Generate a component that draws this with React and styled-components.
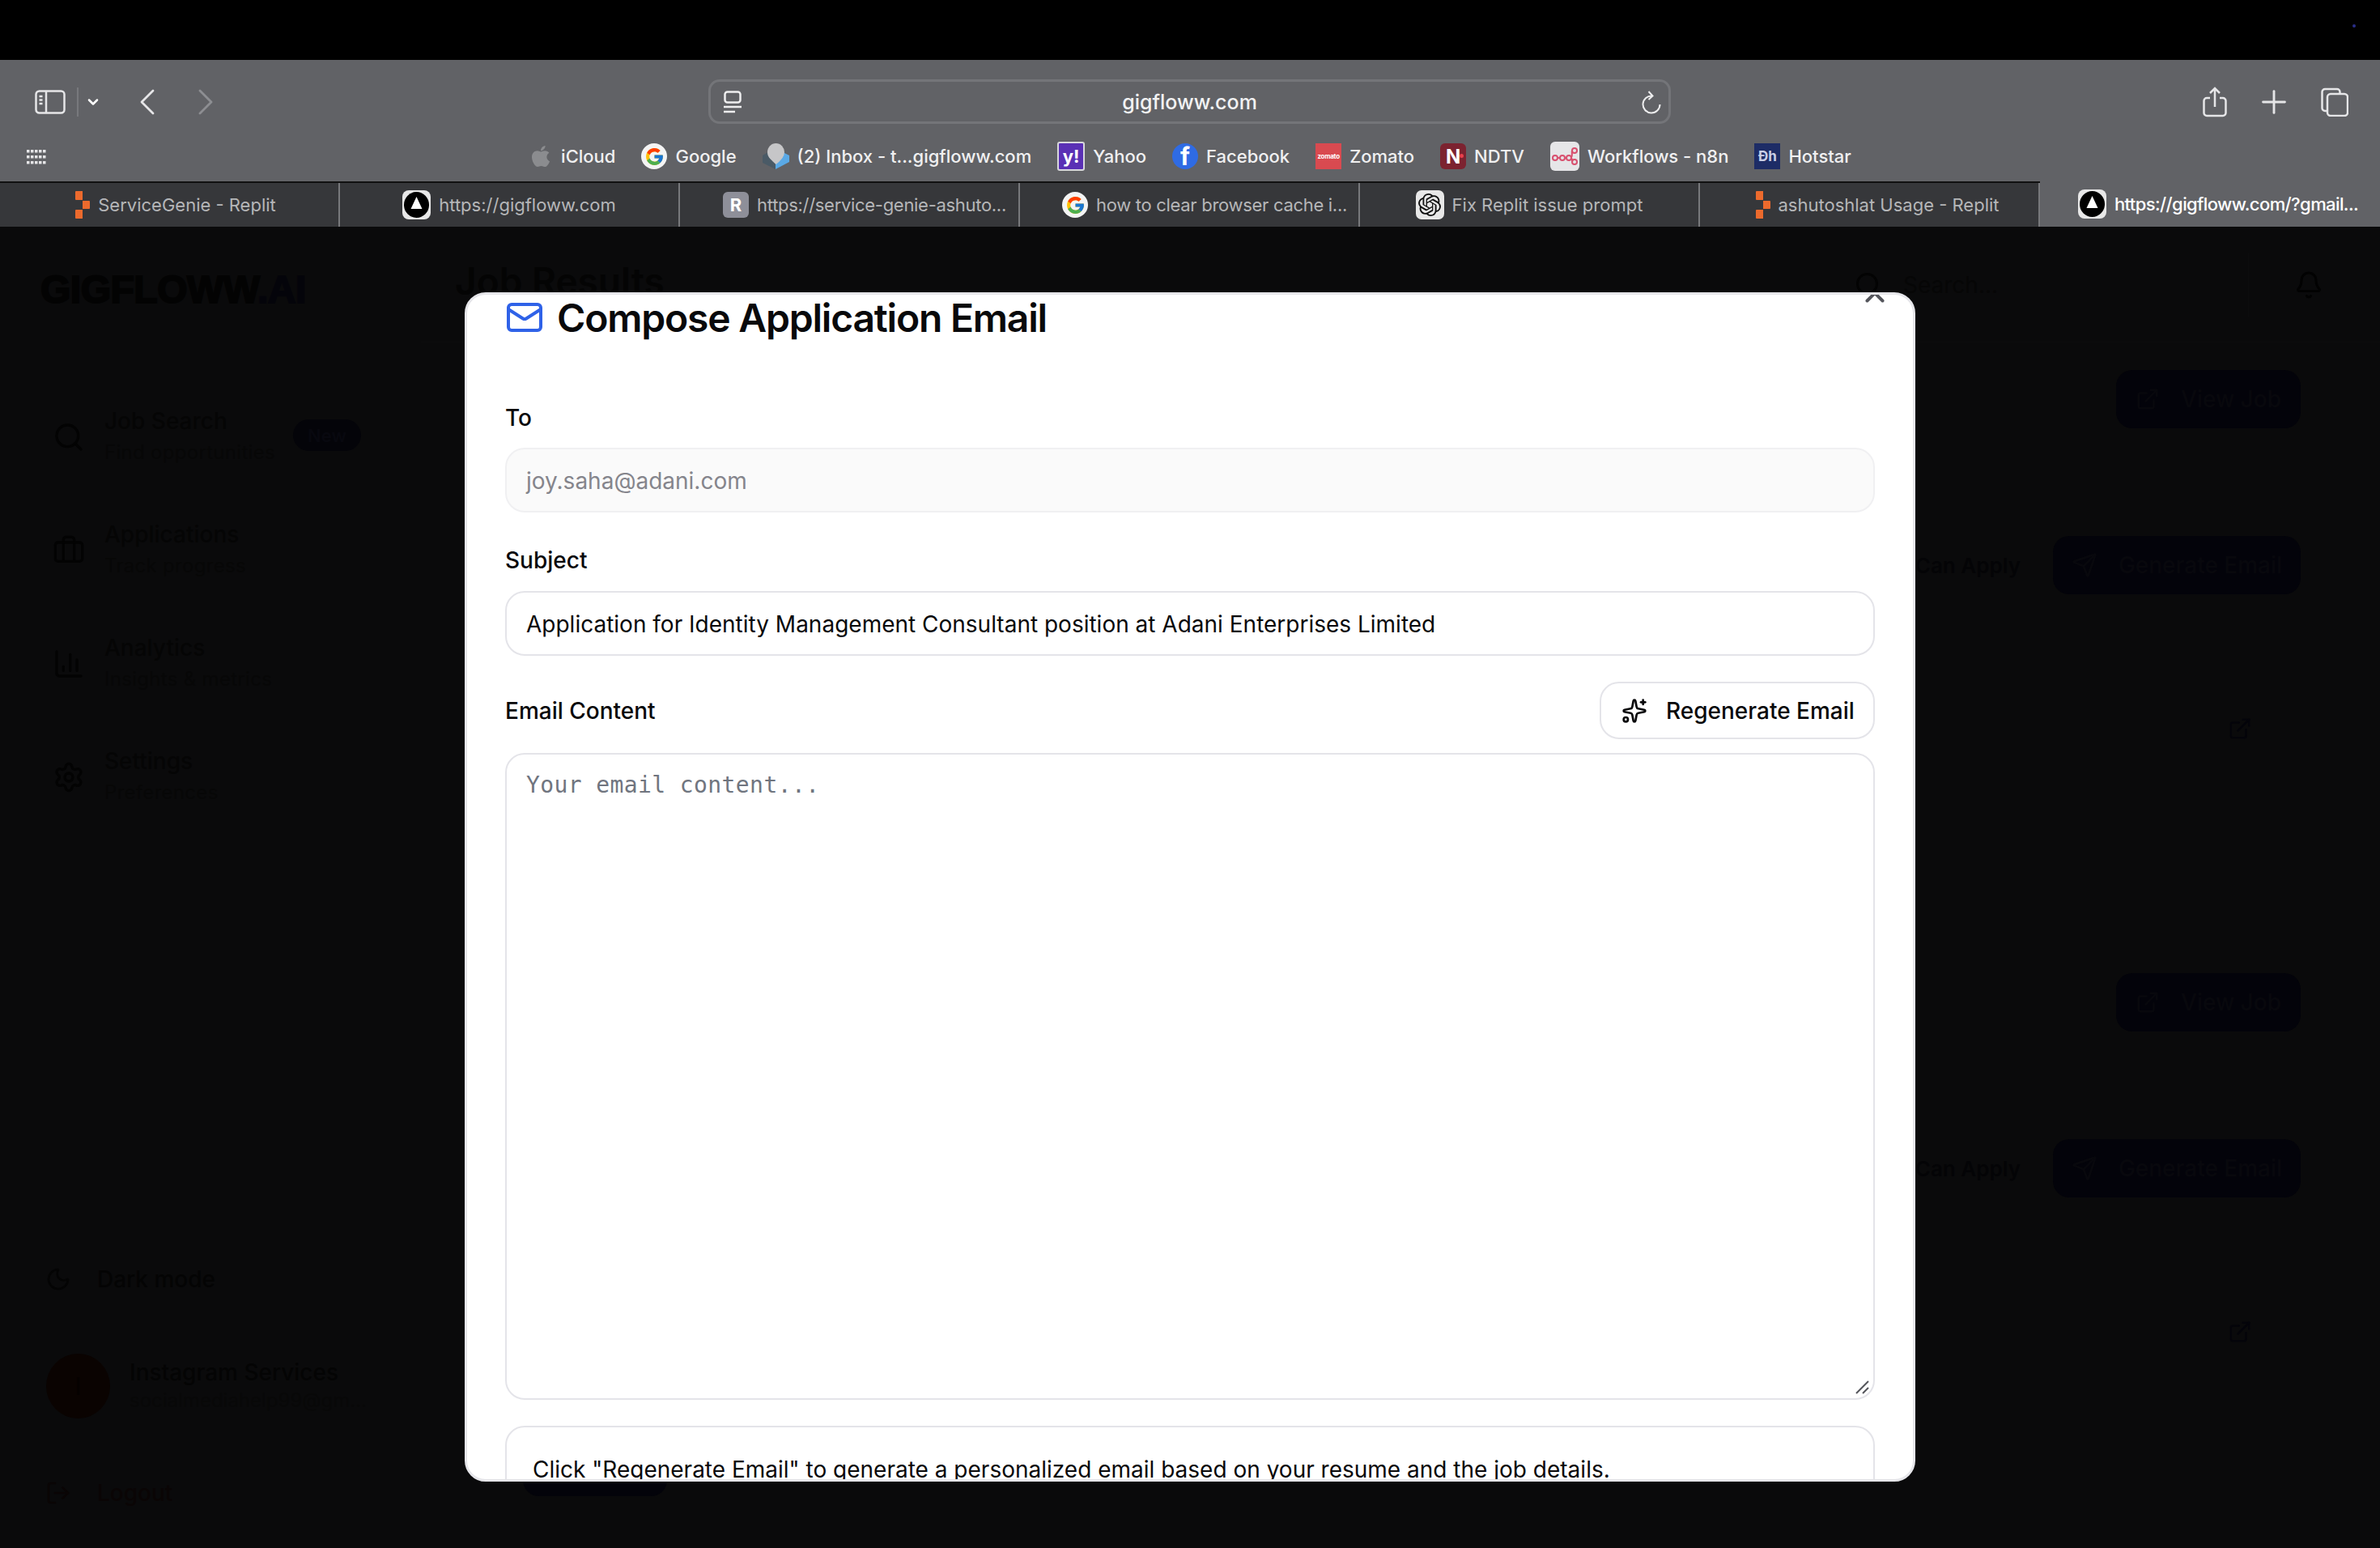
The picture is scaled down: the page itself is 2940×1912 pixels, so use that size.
import React from 'react'
import styled, { createGlobalStyle } from 'styled-components'
import { FcGoogle } from 'react-icons/fc'
import { FaApple } from 'react-icons/fa'
import { SiOpenai } from 'react-icons/si'
import {
  Search, Briefcase, ChartColumn, Settings, Moon, LogOut, Bell, ExternalLink, Send,
  Mail, Sparkles, X, ChevronDown, ChevronLeft, ChevronRight, Plus,
} from 'lucide-react'

const GlobalStyle = createGlobalStyle`
  html, body { margin: 0; padding: 0; background: #0a0a0b; }
  body { font-family: Inter, "Liberation Sans", sans-serif; overflow: hidden; }
  * { box-sizing: border-box; }
`

const Page = styled.div`
  position: relative;
  width: 2940px;
  height: 1912px;
  display: flex;
  flex-direction: column;
  overflow: hidden;
  background: #0a0a0b;
`

const MenuBar = styled.div`
  height: 74px;
  flex: none;
  background: #000;
  position: relative;
`

const MenuDot = styled.span`
  position: absolute;
  left: 2906px;
  top: 30px;
  width: 4px;
  height: 4px;
  border-radius: 50%;
  background: #2a2f8a;
`

const Toolbar = styled.div`
  height: 94px;
  flex: none;
  background: #616266;
  display: flex;
  align-items: center;
  padding: 9px 39px 0 43px;
  color: #e6e6e8;
`

const ToolLeft = styled.div`
  width: 832px;
  display: flex;
  align-items: center;
`

const Divider = styled.span`
  width: 2px;
  height: 36px;
  margin: 0 8px 0 14px;
  background: #77787c;
`

const NavChevron = styled.span`
  display: flex;
  margin-left: ${p => p.$gap}px;
  color: ${p => (p.$dim ? '#8d8e92' : '#e6e6e8')};
`

const UrlBar = styled.div`
  width: 1189px;
  height: 55px;
  border: 3px solid #747579;
  border-radius: 14px;
  display: flex;
  align-items: center;
  justify-content: space-between;
  padding: 0 9px 0 16px;
  position: relative;
`

const UrlText = styled.span`
  position: absolute;
  left: 0;
  right: 0;
  text-align: center;
  font-size: 25px;
  font-weight: 500;
  color: #f2f2f3;
`

const ToolRight = styled.div`
  margin-left: auto;
  display: flex;
  align-items: center;
  gap: 35px;
`

const BookmarkBar = styled.div`
  height: 56px;
  flex: none;
  background: #616266;
  position: relative;
  display: flex;
  align-items: center;
  justify-content: center;
  gap: 32px;
  padding-bottom: 6px;
`

const GridWrap = styled.span`
  position: absolute;
  left: 33px;
  top: 17px;
  display: flex;
`

const Bookmark = styled.span`
  display: flex;
  align-items: center;
  gap: 10px;
  font-size: 22px;
  font-weight: 500;
  color: #f0f0f1;
  white-space: nowrap;
`

const TabStrip = styled.div`
  height: 56px;
  flex: none;
  display: grid;
  grid-template-columns: repeat(7, 420px);
  border-top: 2px solid #111;
  background: #36373a;
`

const Tab = styled.div`
  display: flex;
  align-items: center;
  justify-content: center;
  gap: 10px;
  padding-left: ${p => p.$shift || 0}px;
  font-size: 22px;
  font-weight: ${p => (p.$active ? 500 : 400)};
  letter-spacing: ${p => p.$track || 0}px;
  white-space: nowrap;
  color: ${p => (p.$active ? '#fff' : '#b5b6b8')};
  background: ${p => (p.$active ? '#616266' : 'transparent')};
  margin-top: ${p => (p.$active ? '-2px' : '0')};
  border-right: ${p => (p.$active ? 'none' : '2px solid #77787b')};
`

const Tile = styled.span`
  position: relative;
  width: ${p => p.$w || 32}px;
  height: ${p => p.$h || 32}px;
  flex: none;
  border-radius: ${p => p.$r ?? 6}px;
  background: ${p => p.$bg};
  color: ${p => p.$fg || '#fff'};
  border: ${p => (p.$ring ? `2px solid ${p.$ring}` : 'none')};
  font-size: ${p => p.$size || 20}px;
  font-weight: 700;
  display: flex;
  align-items: center;
  justify-content: center;
  overflow: hidden;
  letter-spacing: ${p => p.$track || 0}px;
`

const NdtvDot = styled.span`
  position: absolute;
  right: 3px;
  top: 13px;
  width: 5px;
  height: 5px;
  border-radius: 50%;
  background: #e8404a;
`

/* dimmed app behind the modal */
const AppBody = styled.div`
  flex: 1;
  display: flex;
  min-height: 0;
`

const Sidebar = styled.aside`
  width: 520px;
  flex: none;
  display: flex;
  flex-direction: column;
  padding: 56px 0 0 50px;
  color: #050505;
`

const Logo = styled.div`
  font-family: "Liberation Sans", Arial, sans-serif;
  font-size: 48px;
  font-weight: 700;
  line-height: 44px;
  -webkit-text-stroke: 2px #030303;
  color: #030303;
  letter-spacing: -0.5px;
  span { color: #04040a; -webkit-text-stroke-color: #04040a; }
`

const NavList = styled.nav`
  margin-top: 119px;
  display: flex;
  flex-direction: column;
  gap: 59px;
`

const NavItem = styled.div`
  height: 81px;
  display: flex;
  align-items: center;
  padding-left: 15px;
  gap: 24px;
  position: relative;
`

const NavLabel = styled.div`
  font-size: 28px;
  font-weight: 500;
  line-height: 38px;
  color: #050505;
`

const NavSub = styled.div`
  font-size: 24px;
  line-height: 40px;
  color: #070707;
  letter-spacing: 0.3px;
`

const NewBadge = styled.span`
  position: absolute;
  left: 312px;
  top: 19px;
  width: 84px;
  height: 39px;
  border-radius: 20px;
  background: #040409;
  color: #08080f;
  font-size: 22px;
  font-weight: 600;
  display: flex;
  align-items: center;
  justify-content: center;
`

const SideFoot = styled.div`
  margin-top: auto;
  padding-bottom: 46px;
  display: flex;
  flex-direction: column;
`

const FootRow = styled.div`
  display: flex;
  align-items: center;
  gap: 32px;
  padding-left: 6px;
  font-size: 28px;
  font-weight: 500;
  height: 44px;
  color: ${p => p.$color || '#040404'};
`

const UserRow = styled.div`
  display: flex;
  align-items: center;
  gap: 24px;
  padding-left: 7px;
  margin: 70px 0 70px;
`

const Avatar = styled.div`
  width: 79px;
  height: 80px;
  border-radius: 50%;
  background: #0a0301;
  color: #050100;
  font-size: 30px;
  display: flex;
  align-items: center;
  justify-content: center;
`

const UserName = styled.div`
  font-size: 28px;
  font-weight: 500;
  line-height: 36px;
  color: #040404;
`

const UserMail = styled.div`
  font-size: 24px;
  line-height: 34px;
  color: #080808;
`

const Main = styled.main`
  flex: 1;
  display: flex;
  flex-direction: column;
  min-width: 0;
`

const MainHeader = styled.header`
  height: 143px;
  flex: none;
  padding: 33px 70px 0 42px;
  display: flex;
  align-items: flex-start;
  justify-content: space-between;
  border-bottom: 1px solid #0c0c0d;
`

const PageTitle = styled.h1`
  margin: 0;
  font-size: 46px;
  font-weight: 600;
  line-height: 68px;
  color: #040404;
`

const HeaderTools = styled.div`
  display: flex;
  align-items: center;
  gap: 56px;
`

const SearchBox = styled.div`
  width: 494px;
  height: 78px;
  display: flex;
  align-items: center;
  gap: 25px;
  padding-left: 6px;
  font-size: 28px;
  color: #060606;
  border-right: 1px solid #0d0d0e;
`

const JobCard = styled.section`
  height: 745px;
  flex: none;
  padding: 34px 98px 0 0;
  display: flex;
  flex-direction: column;
  align-items: flex-end;
`

const DarkButton = styled.div`
  height: 72px;
  width: ${p => p.$w}px;
  flex: none;
  border-radius: 20px;
  background: #03030a;
  color: #08080d;
  display: flex;
  align-items: center;
  justify-content: center;
  gap: 26px;
  font-size: 28px;
  font-weight: 500;
`

const ApplyRow = styled.div`
  margin-top: 133px;
  flex: none;
  display: flex;
  align-items: center;
  gap: 40px;
`

const ApplyNote = styled.span`
  font-size: 26px;
  font-weight: 600;
  color: #040406;
`

const CardLink = styled.span`
  display: flex;
  flex: none;
  margin: 151px 60px 0 0;
  color: #04040a;
`

const LowerAction = styled.div`
  align-self: flex-start;
  flex: none;
  width: 178px;
  height: 72px;
  margin: 116px 0 0 126px;
  border-radius: 20px;
  background: #03030a;
`

/* modal */
const Modal = styled.div`
  position: absolute;
  left: 574px;
  top: 361px;
  width: 1792px;
  height: 1469px;
  background: #fff;
  border: 3px solid #e6e6ea;
  border-radius: 26px;
  overflow: hidden;
  padding: 0 47px;
  color: #09090b;
`

const CloseMark = styled.span`
  position: absolute;
  right: 28px;
  top: -21px;
  display: flex;
  color: #55565c;
`

const ModalTitle = styled.h2`
  margin: 0;
  height: 56px;
  display: flex;
  align-items: center;
  gap: 16px;
  font-size: 48px;
  font-weight: 600;
  letter-spacing: -1.2px;
  color: #09090b;
`

const Field = styled.div`
  display: flex;
  flex-direction: column;
  margin-top: ${p => p.$top}px;
`

const FieldLabel = styled.label`
  font-size: 28px;
  font-weight: 500;
  line-height: 40px;
`

const TextBox = styled.div`
  height: 80px;
  margin-top: ${p => p.$top}px;
  border: 2px solid ${p => (p.$muted ? '#f0f0f2' : '#e4e4e9')};
  border-radius: 24px;
  background: ${p => (p.$muted ? '#fafafa' : '#fff')};
  color: ${p => (p.$muted ? '#85858c' : '#09090b')};
  font-size: 28px;
  line-height: 78px;
  padding: 0 24px;
  white-space: nowrap;
`

const ContentHead = styled.div`
  display: flex;
  align-items: center;
  justify-content: space-between;
  margin-top: 32px;
`

const RegenButton = styled.button`
  width: 340px;
  height: 71px;
  border: 2px solid #e4e4e9;
  border-radius: 24px;
  background: #fff;
  color: #09090b;
  font: 500 28px Inter, sans-serif;
  display: flex;
  align-items: center;
  gap: 23px;
  padding: 0 0 0 25px;
`

const ContentArea = styled.div`
  position: relative;
  margin-top: 17px;
  height: 799px;
  border: 2px solid #e4e4e9;
  border-radius: 24px;
  padding: 18px 24px;
  font-family: "DejaVu Sans Mono", monospace;
  font-size: 28px;
  letter-spacing: 0.4px;
  line-height: 40px;
  color: #70757f;
`

const Grip = styled.span`
  position: absolute;
  right: 4px;
  bottom: 4px;
  display: flex;
`

const HintBox = styled.div`
  margin-top: 32px;
  height: 120px;
  border: 2px solid #e4e4e9;
  border-radius: 24px;
  padding: 32px 32px 0;
  font-size: 28px;
  line-height: 40px;
  white-space: nowrap;
`

const ReplitMark = () => (
  <svg width="18" height="34" viewBox="0 0 18 34">
    <path d="M0 1a1 1 0 0 1 1-1h8v11H1a1 1 0 0 1-1-1zM9 12h8a1 1 0 0 1 1 1v8a1 1 0 0 1-1 1H9zM0 24a1 1 0 0 1 1-1h8v11H1a1 1 0 0 1-1-1z" fill="#ec6a2d" />
  </svg>
)

const GigMark = () => (
  <Tile $w={35} $h={36} $r={8} $bg="#e8e8e8">
    <svg width="35" height="36" viewBox="0 0 35 36">
      <ellipse cx="17.5" cy="18" rx="15.5" ry="16" fill="#000" />
      <path d="M17.5 8l7 15H10.5z" fill="#fff" />
    </svg>
  </Tile>
)

const GoogleMark = () => (
  <Tile $r={16} $bg="#f4f4f4"><FcGoogle size={25} /></Tile>
)

const InboxMark = () => (
  <svg width="33" height="32" viewBox="0 0 33 32">
    <path d="M0 15l10-6 6 10v13L0 24z" fill="#4a5a66" />
    <path d="M33 15l-10-5-7 10v12l17-9z" fill="#5aa9e6" />
    <ellipse cx="16.5" cy="11" rx="10.5" ry="11" fill="#c6c6c8" />
    <path d="M8 17c3 4 6 7 8.500 9 3-2 6-5 8.500-9z" fill="#c6c6c8" />
  </svg>
)

const N8nMark = () => (
  <Tile $w={36} $h={36} $r={6} $bg="#e6e6e8">
    <svg width="32" height="22" viewBox="0 0 32 22" fill="none" stroke="#d8506f" strokeWidth="2">
      <circle cx="4" cy="13" r="3" />
      <circle cx="13" cy="13" r="3" />
      <circle cx="21" cy="13" r="3" />
      <circle cx="28" cy="4" r="3" />
      <circle cx="28" cy="18" r="3" />
      <path d="M7 13h3M16 13h2M24 12c2-1 0-7 1-8M24 14c2 1 1 4 1 4" />
    </svg>
  </Tile>
)

const SidebarIcon = () => (
  <svg width="38" height="30" viewBox="0 0 38 30" fill="none" stroke="#e6e6e8" strokeWidth="2.500">
    <rect x="1.500" y="1.500" width="35" height="27" rx="4" />
    <path d="M14 2v26" />
    <path d="M5.500 8h4M5.500 12.500h4M5.500 17h4" />
  </svg>
)

const PageIcon = () => (
  <svg width="22" height="28" viewBox="0 0 22 28" fill="none" stroke="#eeeeef" strokeWidth="2.500">
    <rect x="1.500" y="1.500" width="19" height="13" rx="3" />
    <path d="M0 20h22M0 26h14" />
  </svg>
)

const ReloadIcon = () => (
  <svg width="24" height="30" viewBox="0 0 24 30" fill="none" stroke="#eeeeef" strokeWidth="2">
    <path d="M13 7.500A10.500 10.500 0 1 0 22.500 18" />
    <path d="M8.500 2l5 5.500-5 4.500" />
  </svg>
)

const ShareIcon = () => (
  <svg width="30" height="38" viewBox="0 0 30 38" fill="none" stroke="#e6e6e8" strokeWidth="2.500">
    <path d="M9 14H5a3.500 3.500 0 0 0-3.500 3.500v15A3.500 3.500 0 0 0 5 36h20a3.500 3.500 0 0 0 3.500-3.500v-15A3.500 3.500 0 0 0 25 14h-4" />
    <path d="M15 25V2M9 8l6-6 6 6" />
  </svg>
)

const TabsIcon = () => (
  <svg width="34" height="36" viewBox="0 0 34 36" fill="none" stroke="#e6e6e8" strokeWidth="2.500">
    <path d="M7 29H5a3.500 3.500 0 0 1-3.500-3.500v-20A3.500 3.500 0 0 1 5 2h15a3.500 3.500 0 0 1 3.500 3.500V7" />
    <rect x="8" y="8" width="25" height="27" rx="4" />
  </svg>
)

const AppsIcon = () => (
  <svg width="24" height="18" viewBox="0 0 24 18" fill="#e6e6e8">
    {[0, 7, 14].map(y => [0, 5, 10, 15, 20].map(x => (
      <rect key={`${x}-${y}`} x={x} y={y} width="3.500" height="3.500" />
    )))}
  </svg>
)

const bookmarks = [
  { label: 'iCloud', icon: <FaApple size={30} color="#8b8c8f" /> },
  { label: 'Google', icon: <GoogleMark /> },
  { label: '(2) Inbox - t...gigfloww.com', icon: <InboxMark /> },
  { label: 'Yahoo', icon: <Tile $w={34} $h={36} $r={3} $bg="#5a30b5" $ring="#d8d8dc" $size={22}>y!</Tile> },
  { label: 'Facebook', icon: <Tile $r={16} $bg="#2f6be4" $size={30}>f</Tile> },
  { label: 'Zomato', icon: <Tile $r={0} $bg="#d94a50" $size={8} $track={-0.3}>zomato</Tile> },
  { label: 'NDTV', icon: <Tile $bg="#7c2330" $size={24}>N<NdtvDot /></Tile> },
  { label: 'Workflows - n8n', icon: <N8nMark /> },
  { label: 'Hotstar', icon: <Tile $r={0} $bg="#1d2c66" $fg="#c9cfe6" $size={17}>Đh</Tile> },
]

const tabs = [
  { label: 'ServiceGenie - Replit', icon: <ReplitMark />, shift: 16 },
  { label: 'https://gigfloww.com', icon: <GigMark /> },
  { label: 'https://service-genie-ashuto...', icon: <Tile $bg="#8e8f99" $size={22}>R</Tile>, shift: 38, track: -0.3 },
  { label: 'how to clear browser cache i...', icon: <GoogleMark />, shift: 38, track: -0.3 },
  { label: 'Fix Replit issue prompt', icon: <Tile $w={35} $h={36} $r={7} $bg="#e8e8e8" $fg="#111"><SiOpenai size={28} /></Tile> },
  { label: 'ashutoshlat Usage - Replit', icon: <ReplitMark />, shift: 20 },
  { label: 'https://gigfloww.com/?gmail...', icon: <GigMark />, active: true, shift: 20, track: -0.6 },
]

const navItems = [
  { label: 'Job Search', sub: 'Find opportunities', Icon: Search, badge: true },
  { label: 'Applications', sub: 'Track progress', Icon: Briefcase },
  { label: 'Analytics', sub: 'Insights & metrics', Icon: ChartColumn },
  { label: 'Settings', sub: 'Preferences', Icon: Settings },
]

export default function App() {
  return (
    <Page>
      <GlobalStyle />
      <MenuBar><MenuDot /></MenuBar>

      <Toolbar>
        <ToolLeft>
          <SidebarIcon />
          <Divider />
          <ChevronDown size={20} strokeWidth={3} color="#fff" />
          <NavChevron $gap={29}><ChevronLeft size={56} strokeWidth={1.2} /></NavChevron>
          <NavChevron $gap={16} $dim><ChevronRight size={56} strokeWidth={1.2} /></NavChevron>
        </ToolLeft>
        <UrlBar>
          <PageIcon />
          <UrlText>gigfloww.com</UrlText>
          <ReloadIcon />
        </UrlBar>
        <ToolRight>
          <ShareIcon />
          <Plus size={46} strokeWidth={1.5} color="#e6e6e8" />
          <TabsIcon />
        </ToolRight>
      </Toolbar>

      <BookmarkBar>
        <GridWrap><AppsIcon /></GridWrap>
        {bookmarks.map(b => (
          <Bookmark key={b.label}>{b.icon}{b.label}</Bookmark>
        ))}
      </BookmarkBar>

      <TabStrip>
        {tabs.map(t => (
          <Tab key={t.label} $active={t.active} $shift={t.shift} $track={t.track}>{t.icon}{t.label}</Tab>
        ))}
      </TabStrip>

      <AppBody>
        <Sidebar>
          <Logo>GIGFLOWW<span>.AI</span></Logo>
          <NavList>
            {navItems.map(({ label, sub, Icon, badge }) => (
              <NavItem key={label}>
                <Icon size={40} strokeWidth={2} color="#030303" />
                <div>
                  <NavLabel>{label}</NavLabel>
                  <NavSub>{sub}</NavSub>
                </div>
                {badge && <NewBadge>New</NewBadge>}
              </NavItem>
            ))}
          </NavList>
          <SideFoot>
            <FootRow><Moon size={32} strokeWidth={2} />Dark mode</FootRow>
            <UserRow>
              <Avatar>I</Avatar>
              <div>
                <UserName>Instagram Services</UserName>
                <UserMail>socialmediahelp99@gm...</UserMail>
              </div>
            </UserRow>
            <FootRow $color="#0a0505"><LogOut size={32} strokeWidth={2} />Logout</FootRow>
          </SideFoot>
        </Sidebar>

        <Main>
          <MainHeader>
            <PageTitle>Job Results</PageTitle>
            <HeaderTools>
              <SearchBox><Search size={36} strokeWidth={2} color="#030303" />Search...</SearchBox>
              <Bell size={36} strokeWidth={2} color="#020202" />
            </HeaderTools>
          </MainHeader>
          <JobCard>
            <DarkButton $w={228}><ExternalLink size={30} />View Job</DarkButton>
            <ApplyRow>
              <ApplyNote>You Can Apply</ApplyNote>
              <DarkButton $w={306}><Send size={32} />Generate Email</DarkButton>
            </ApplyRow>
            <CardLink><ExternalLink size={30} /></CardLink>
          </JobCard>
          <JobCard>
            <DarkButton $w={228}><ExternalLink size={30} />View Job</DarkButton>
            <ApplyRow>
              <ApplyNote>You Can Apply</ApplyNote>
              <DarkButton $w={306}><Send size={32} />Generate Email</DarkButton>
            </ApplyRow>
            <CardLink><ExternalLink size={30} /></CardLink>
            <LowerAction />
          </JobCard>
        </Main>
      </AppBody>

      <Modal>
        <CloseMark><X size={38} strokeWidth={2.5} /></CloseMark>
        <ModalTitle><Mail size={48} strokeWidth={2} color="#2f62e8" />Compose Application Email</ModalTitle>

        <Field $top={76}>
          <FieldLabel>To</FieldLabel>
          <TextBox $muted $top={17}>joy.saha@adani.com</TextBox>
        </Field>
        <Field $top={39}>
          <FieldLabel>Subject</FieldLabel>
          <TextBox $top={18}>Application for Identity Management Consultant position at Adani Enterprises Limited</TextBox>
        </Field>

        <ContentHead>
          <FieldLabel>Email Content</FieldLabel>
          <RegenButton><Sparkles size={32} strokeWidth={2} />Regenerate Email</RegenButton>
        </ContentHead>
        <ContentArea>
          Your email content...
          <Grip>
            <svg width="20" height="20" viewBox="0 0 20 20" stroke="#55565c" strokeWidth="2">
              <path d="M3 18L18 3M11 18l7-7" />
            </svg>
          </Grip>
        </ContentArea>
        <HintBox>Click "Regenerate Email" to generate a personalized email based on your resume and the job details.</HintBox>
      </Modal>
    </Page>
  )
}
